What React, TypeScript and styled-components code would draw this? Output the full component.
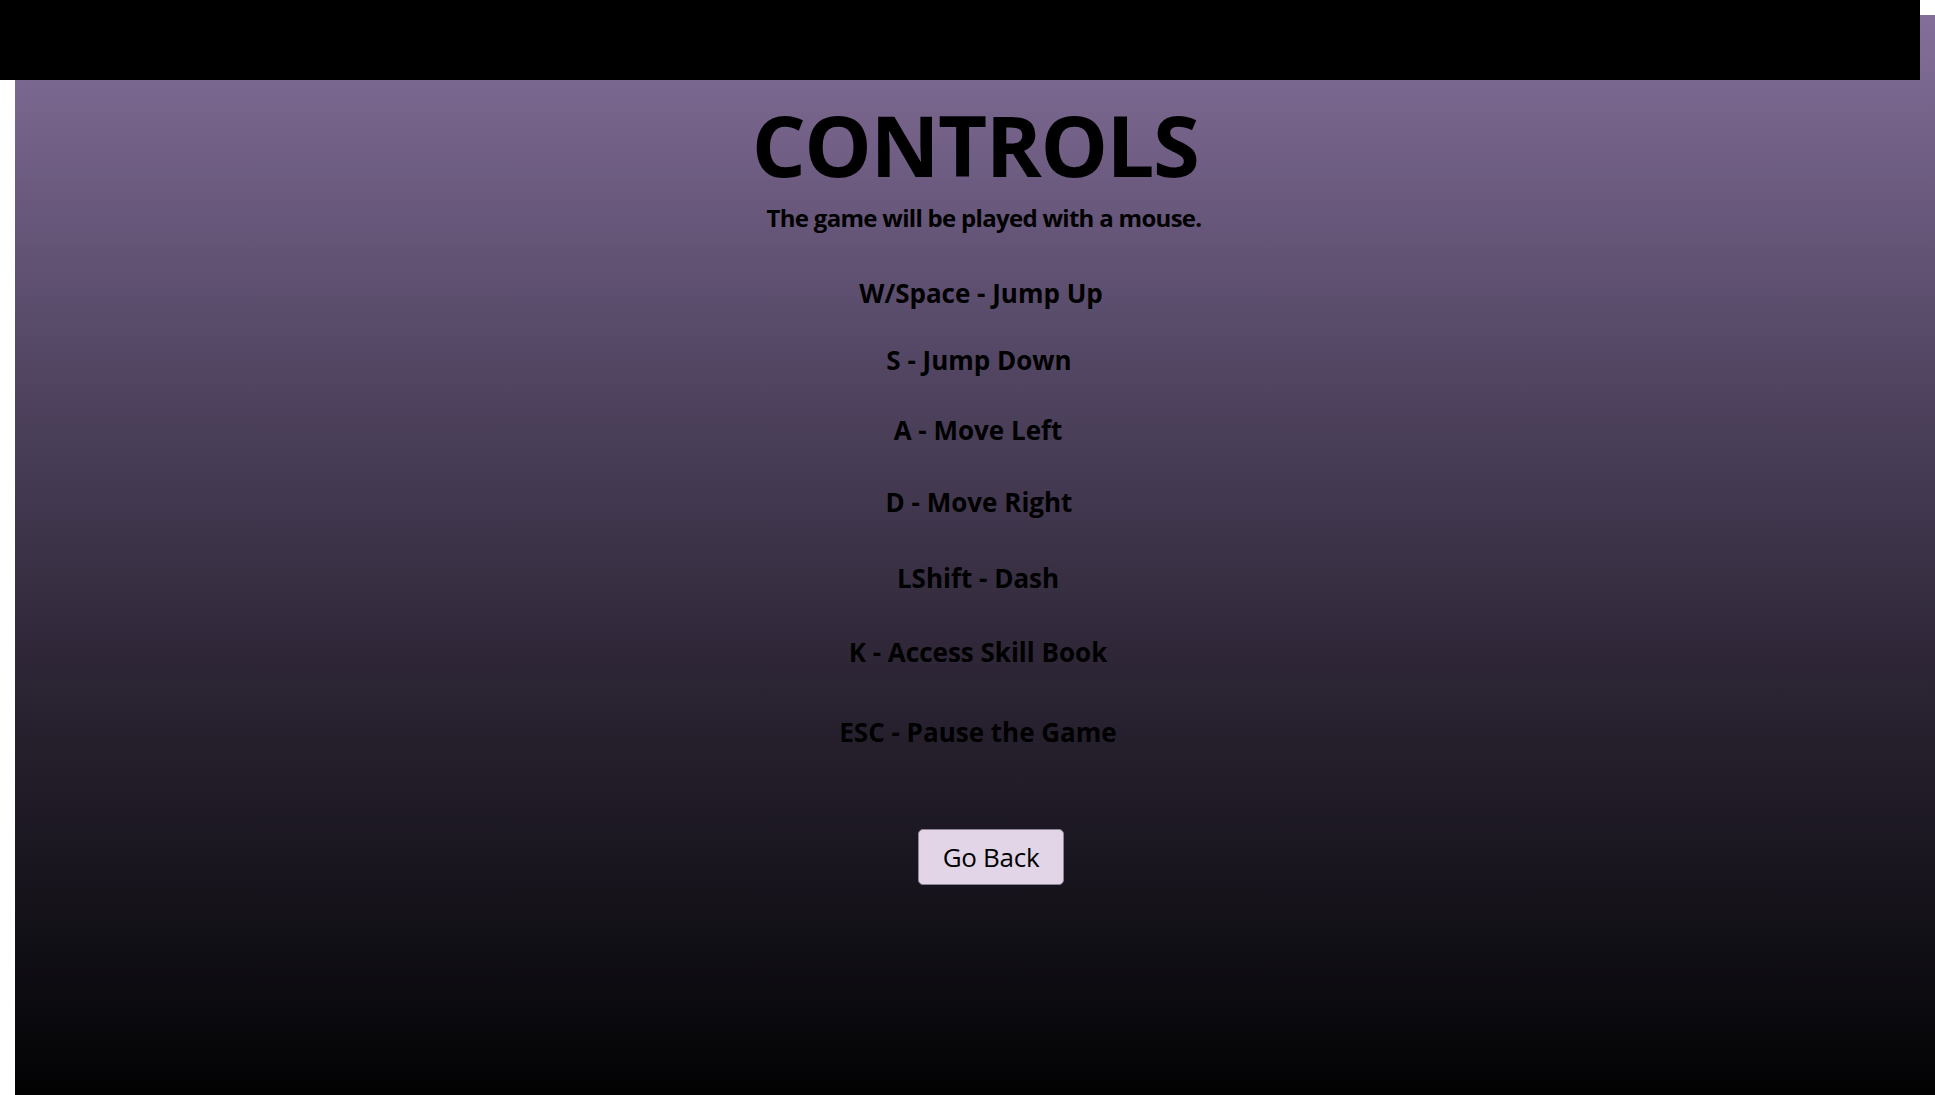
import React from "react";
import styled, { createGlobalStyle } from "styled-components";

const Global = createGlobalStyle`
  html, body {
    margin: 0;
    padding: 0;
    background: #ffffff;
    overflow: hidden;
  }
  body {
    font-family: "Open Sans", "Noto Sans", "DejaVu Sans", sans-serif;
  }
`;

const TopBar = styled.header`
  position: fixed;
  top: 0;
  left: 0;
  width: 1920px;
  height: 80px;
  background: #000000;
  z-index: 10;
`;

const Page = styled.main`
  margin: 15px 0 0 15px;
  width: 1920px;
  height: 1095px;
  background: linear-gradient(
    to bottom,
    #846f9a 0%,
    #4e425e 35%,
    #2a2332 62%,
    #0c0b10 90%,
    #000000 100%
  );
  display: flex;
  flex-direction: column;
  align-items: center;
  padding-top: 87px;
  box-sizing: border-box;
`;

const Title = styled.h1`
  margin: 0;
  font-size: 85px;
  line-height: 1;
  font-weight: 700;
  letter-spacing: -1.5px;
  color: #000;
`;

const Subtitle = styled.p<{ $shift: number }>`
  margin: 19px 0 0 ${(p) => p.$shift * 2}px;
  font-size: 24px;
  line-height: 1;
  font-weight: 700;
  letter-spacing: -0.7px;
  color: #000;
`;

const ControlList = styled.ul`
  list-style: none;
  margin: 0;
  padding: 0;
  display: flex;
  flex-direction: column;
  align-items: center;
`;

const ControlItem = styled.li<{ $gap: number; $shift: number }>`
  margin: ${(p) => p.$gap}px 0 0 ${(p) => p.$shift * 2}px;
  font-size: 26px;
  line-height: 1;
  font-weight: 700;
  color: #000;
`;

const BackButton = styled.button`
  margin: 84px 0 0 32px;
  width: 146px;
  height: 56px;
  box-sizing: border-box;
  background: #e1d5e7;
  border: 1px solid #8f8596;
  border-radius: 5px;
  font-family: inherit;
  font-size: 26px;
  font-weight: 400;
  letter-spacing: -0.3px;
  color: #000;
  padding: 0;
  cursor: pointer;
`;

const controls = [
  { text: "W/Space - Jump Up", gap: 50, shift: 6 },
  { text: "S - Jump Down", gap: 41, shift: 4 },
  { text: "A - Move Left", gap: 44, shift: 3 },
  { text: "D - Move Right", gap: 46, shift: 4 },
  { text: "LShift - Dash", gap: 50, shift: 3 },
  { text: "K - Access Skill Book", gap: 48, shift: 3 },
  { text: "ESC - Pause the Game", gap: 54, shift: 3 },
];

export default function App() {
  return (
    <>
      <Global />
      <TopBar />
      <Page>
        <Title>CONTROLS</Title>
        <Subtitle $shift={9}>The game will be played with a mouse.</Subtitle>
        <ControlList>
          {controls.map((c) => (
            <ControlItem key={c.text} $gap={c.gap} $shift={c.shift}>
              {c.text}
            </ControlItem>
          ))}
        </ControlList>
        <BackButton>Go Back</BackButton>
      </Page>
    </>
  );
}
